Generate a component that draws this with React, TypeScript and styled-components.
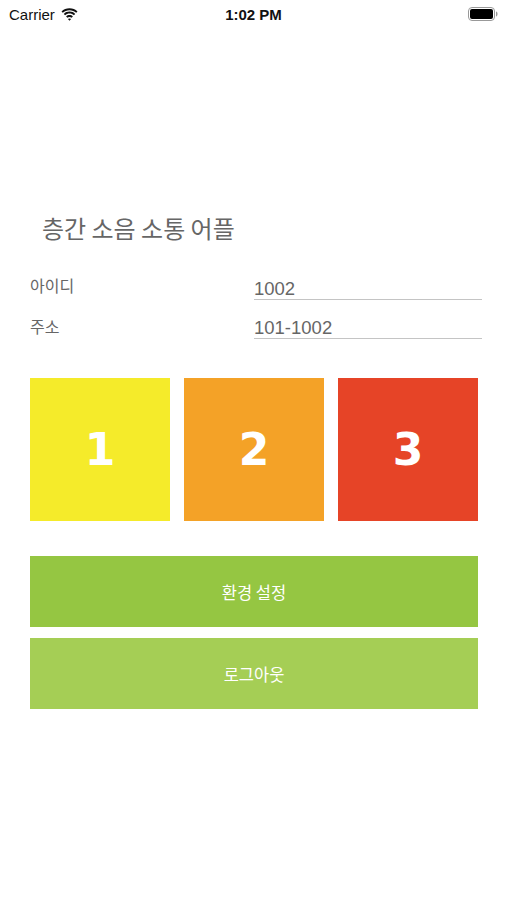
import styled, { createGlobalStyle } from 'styled-components'

const GlobalStyle = createGlobalStyle`
    body {
        margin: 0;
        background: #ffffff;
        font-family: "Noto Sans CJK KR", "Noto Sans", sans-serif;
    }
`

const Screen = styled.div`
    width: 507px;
    min-height: 900px;
    display: flex;
    flex-flow: column;
    background: #ffffff;
`

const StatusBar = styled.div`
    height: 28px;
    padding: 0 9px;
    display: grid;
    grid-template-columns: 1fr auto 1fr;
    align-items: center;
    font-family: "Liberation Sans", "Noto Sans", sans-serif;
    font-size: 15px;
    color: #111;
`

const StatusLeft = styled.div`
    display: flex;
    flex-flow: row;
    align-items: center;
    gap: 6px;
`

const Clock = styled.div`
    font-weight: bold;
`

const StatusRight = styled.div`
    display: flex;
    justify-content: flex-end;
    align-items: center;
`

const Content = styled.div`
    padding: 0 25px 0 30px;
    display: flex;
    flex-flow: column;
`

const Title = styled.h1`
    margin: 184px 0 0 12px;
    font-size: 24px;
    line-height: 32px;
    font-weight: normal;
    color: #666;
`

const Form = styled.div`
    margin-top: 31px;
    display: flex;
    flex-flow: column;
    gap: 16px;
`

const FormRow = styled.div`
    display: flex;
    flex-flow: row;
    align-items: flex-start;
`

const Label = styled.div`
    width: 224px;
    flex-shrink: 0;
    font-size: 16px;
    line-height: 20px;
    color: #666;
`

const Field = styled.div<{ $offset: number }>`
    width: 228px;
    flex-shrink: 0;
    padding-top: ${p => p.$offset}px;
    font-family: "Liberation Sans", "Noto Sans", sans-serif;
    font-size: 18.5px;
    line-height: 20px;
    color: #666;
    border-bottom: 1px solid #c4c4c4;
`

const Levels = styled.div`
    margin-top: 39px;
    display: grid;
    grid-template-columns: repeat(3, 140px);
    gap: 14px;
`

const Level = styled.div<{ $color: string }>`
    height: 143px;
    background: ${p => p.$color};
    display: flex;
    align-items: center;
    justify-content: center;
    color: #ffffff;
    font-family: "DejaVu Sans", "Liberation Sans", sans-serif;
    font-weight: bold;
    font-size: 44px;
`

const Actions = styled.div`
    margin-top: 35px;
    display: flex;
    flex-flow: column;
    gap: 11px;
`

const ActionButton = styled.button<{ $color: string }>`
    height: 71px;
    width: 448px;
    border: none;
    background: ${p => p.$color};
    color: #ffffff;
    font-family: "Noto Sans CJK KR", "Noto Sans", sans-serif;
    font-size: 16.5px;
    cursor: pointer;
`

const WifiIcon = () => (
    <svg width="17" height="13" viewBox="0 0 17 13">
        <path d="M8.5 2.2c2.6 0 4.9 1 6.7 2.6l1.3-1.4C14.4 1.4 11.6.2 8.5.2S2.6 1.4.5 3.4l1.3 1.4C3.6 3.2 5.9 2.2 8.5 2.2z" fill="#111" />
        <path d="M8.5 5.6c1.7 0 3.2.6 4.4 1.7l1.3-1.4C12.7 4.4 10.7 3.6 8.5 3.6s-4.2.8-5.7 2.3l1.3 1.4C5.3 6.2 6.8 5.6 8.5 5.6z" fill="#111" />
        <path d="M8.5 9c.8 0 1.5.3 2.1.8l1.3-1.4C11 7.5 9.8 7 8.5 7S6 7.5 5.1 8.4l1.3 1.4C7 9.3 7.7 9 8.5 9z" fill="#111" />
        <path d="M8.5 12.8l1.6-1.7c-.4-.4-1-.6-1.6-.6s-1.2.2-1.6.6z" fill="#111" />
    </svg>
)

const BatteryIcon = () => (
    <svg width="30" height="14" viewBox="0 0 30 14">
        <rect x="0.5" y="0.5" width="26" height="13" rx="3.5" fill="none" stroke="#999" />
        <rect x="2" y="2" width="23" height="10" rx="2" fill="#000" />
        <path d="M28 4.5c1 .3 1.5 1.2 1.5 2.5s-.5 2.2-1.5 2.5z" fill="#999" />
    </svg>
)

const levels = [
    { label: '1', color: '#f5eb2a' },
    { label: '2', color: '#f4a227' },
    { label: '3', color: '#e64427' },
]

const App = () => {
    return (
        <Screen>
            <GlobalStyle />
            <StatusBar>
                <StatusLeft>
                    <span>Carrier</span>
                    <WifiIcon />
                </StatusLeft>
                <Clock>1:02 PM</Clock>
                <StatusRight>
                    <BatteryIcon />
                </StatusRight>
            </StatusBar>
            <Content>
                <Title>층간 소음 소통 어플</Title>
                <Form>
                    <FormRow>
                        <Label>아이디</Label>
                        <Field $offset={4}>1002</Field>
                    </FormRow>
                    <FormRow>
                        <Label>주소</Label>
                        <Field $offset={2}>101-1002</Field>
                    </FormRow>
                </Form>
                <Levels>
                    {levels.map(l => (
                        <Level key={l.label} $color={l.color}>{l.label}</Level>
                    ))}
                </Levels>
                <Actions>
                    <ActionButton $color="#95c642">환경 설정</ActionButton>
                    <ActionButton $color="#a5ce55">로그아웃</ActionButton>
                </Actions>
            </Content>
        </Screen>
    )
}

export default App
